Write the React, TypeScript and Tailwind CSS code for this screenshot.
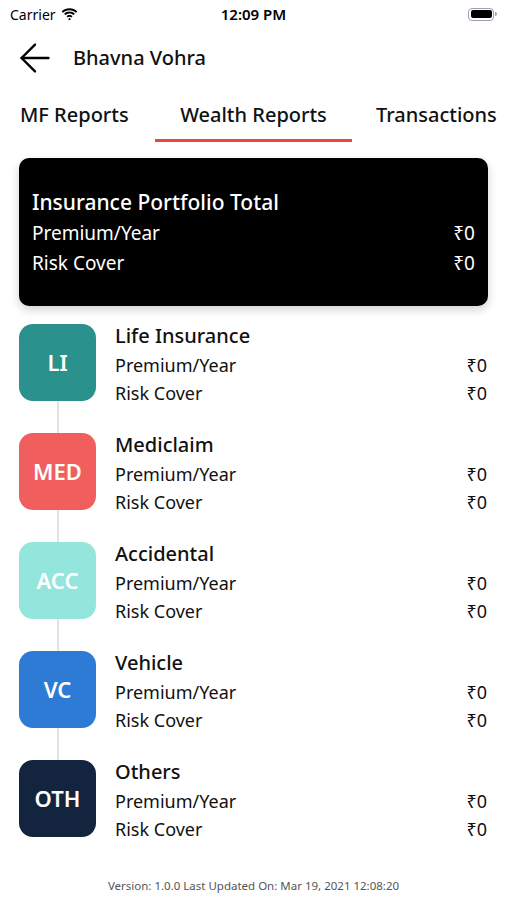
import { ArrowLeft } from "lucide-react";

const policies = [
  { code: "LI", name: "Life Insurance", color: "bg-[#2b918c]" },
  { code: "MED", name: "Mediclaim", color: "bg-[#f15e5e]" },
  { code: "ACC", name: "Accidental", color: "bg-[#94e6dd]" },
  { code: "VC", name: "Vehicle", color: "bg-[#2e7bd6]" },
  { code: "OTH", name: "Others", color: "bg-[#13243e]" },
];

function StatusBar() {
  return (
    <div className="h-[28px] flex items-center justify-between px-[10px] text-black">
      <div className="flex items-center gap-[5px] w-[120px]">
        <span className="text-[14px]">Carrier</span>
        <svg width="17" height="12" viewBox="0 0 17 12">
          <path d="M8.5 2.2c2.5 0 4.8 1 6.5 2.6l1.3-1.4C14.3 1.4 11.5.2 8.5.2S2.7 1.4.7 3.4L2 4.8c1.7-1.6 4-2.6 6.5-2.6z" fill="black" />
          <path d="M8.5 5.5c1.6 0 3 .6 4.1 1.6l1.3-1.4C12.5 4.4 10.6 3.6 8.5 3.6S4.5 4.4 3.1 5.7l1.3 1.4c1.1-1 2.5-1.6 4.1-1.6z" fill="black" />
          <path d="M8.5 8.8c.7 0 1.3.3 1.8.7l1.3-1.4C10.8 7.4 9.7 6.9 8.5 6.9s-2.3.5-3.1 1.2l1.3 1.4c.5-.4 1.1-.7 1.8-.7z" fill="black" />
          <path d="M8.5 9.8 10 11.4 8.5 12 7 11.4z" fill="black" />
        </svg>
      </div>
      <span className="text-[15px] font-semibold">12:09 PM</span>
      <div className="w-[120px] flex justify-end">
        <div className="flex items-center">
          <div className="w-[26px] h-[13px] rounded-[4px] border border-gray-400 p-[1.5px]">
            <div className="w-full h-full bg-black rounded-[2px]" />
          </div>
          <div className="w-[2px] h-[4px] bg-gray-400 rounded-r-sm ml-[1px]" />
        </div>
      </div>
    </div>
  );
}

function PolicyRow({ label }: { label: string }) {
  return (
    <div className="flex justify-between leading-[28px] text-[18px] text-[#111]">
      <span>{label}</span>
      <span>₹0</span>
    </div>
  );
}

export default function App() {
  return (
    <div
      className="w-[507px] h-[900px] bg-white flex flex-col overflow-hidden"
      style={{ fontFamily: '"Noto Sans", "Open Sans", sans-serif' }}
    >
      <StatusBar />

      {/* HEADER */}
      <div className="h-[60px] flex items-center pl-[12px]">
        <ArrowLeft className="w-[46px] h-[46px] text-black" strokeWidth={1.25} />
        <span className="ml-[15px] text-[20px] font-medium text-[#111]">Bhavna Vohra</span>
      </div>

      {/* TABS */}
      <div className="h-[54px] flex items-stretch whitespace-nowrap text-[20px] font-medium text-[#111]">
        <div className="w-[155px] pl-[20px] flex items-center">MF Reports</div>
        <div className="w-[197px] flex items-center justify-center border-b-[3px] border-[#e5483f] pt-[3px]">
          Wealth Reports
        </div>
        <div className="pl-[24px] flex items-center">Transactions</div>
      </div>

      {/* TOTAL CARD */}
      <div className="mx-[19px] mt-[16px] bg-black rounded-[10px] px-[13px] pt-[31px] pb-[28px] text-white shadow-[0_4px_10px_rgba(0,0,0,0.18)]">
        <div className="text-[21px] font-medium leading-[26px]">Insurance Portfolio Total</div>
        <div className="flex justify-between text-[19px] leading-[30px] mt-[3px]">
          <span>Premium/Year</span>
          <span>₹0</span>
        </div>
        <div className="flex justify-between text-[19px] leading-[30px]">
          <span>Risk Cover</span>
          <span>₹0</span>
        </div>
      </div>

      {/* POLICIES */}
      <div className="flex flex-col mt-[18px] pl-[19px] pr-[20px]">
        {policies.map((p, i) => (
          <div key={p.code} className="flex gap-[19px]">
            <div className="flex flex-col items-center w-[77px]">
              <div
                className={`w-[77px] h-[77px] rounded-[14px] ${p.color} flex items-center justify-center text-white text-[22px] font-semibold`}
              >
                {p.code}
              </div>
              {i < policies.length - 1 && <div className="w-[2px] h-[32px] bg-[#e2e2e2]" />}
            </div>
            <div className="flex-1">
              <div className="text-[20px] font-medium leading-[24px] text-[#111]">{p.name}</div>
              <div className="mt-[3px]">
                <PolicyRow label="Premium/Year" />
                <PolicyRow label="Risk Cover" />
              </div>
            </div>
          </div>
        ))}
      </div>

      {/* FOOTER */}
      <p className="mt-auto mb-[6px] text-center text-[11.5px] text-[#555]">
        Version: 1.0.0 Last Updated On: Mar 19, 2021 12:08:20
      </p>
    </div>
  );
}
